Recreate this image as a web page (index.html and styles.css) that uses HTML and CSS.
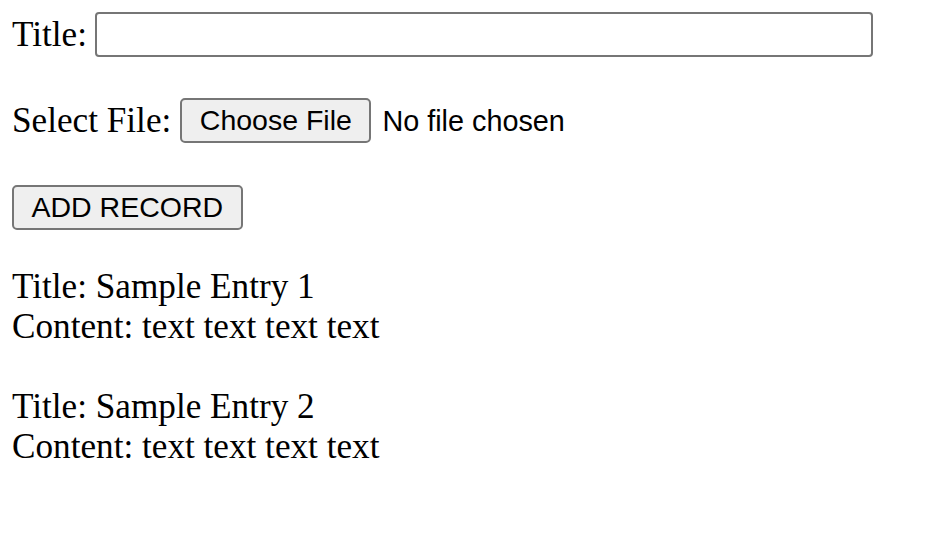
FILE: index.html
```html
<!DOCTYPE html>
<html>
<head>
<meta charset="utf-8">
<title>Records</title>
<link rel="stylesheet" href="styles.css">
</head>
<body>
<form class="form">
  <div class="row row-title">
    <label class="label" for="title">Title:</label>
    <input class="text-input" id="title" type="text">
  </div>
  <div class="row row-file">
    <span class="label">Select File:</span>
    <button type="button" class="btn">Choose File</button>
    <span class="file-name">No file chosen</span>
  </div>
  <div class="row row-submit">
    <button type="button" class="btn">ADD RECORD</button>
  </div>
</form>
<div class="records">
  <div class="record">
    <div>Title: Sample Entry 1</div>
    <div>Content: text text text text</div>
  </div>
  <div class="record">
    <div>Title: Sample Entry 2</div>
    <div>Content: text text text text</div>
  </div>
</div>
</body>
</html>
```
FILE: styles.css
```css
html, body {
  background: #ffffff;
}
body {
  margin: 0;
  padding: 12px;
  font-family: "Liberation Serif", "Times New Roman", serif;
  font-size: 35.2px;
  line-height: 40px;
  color: #000000;
}
.form {
  display: flex;
  flex-direction: column;
  margin: 0;
}
.row {
  display: flex;
  align-items: center;
}
.row-title {
  gap: 8px;
  margin-bottom: 41px;
}
.row-file {
  margin-bottom: 42px;
}
.row-file .label {
  margin-right: 9px;
}
.row-submit {
  margin-bottom: 37px;
}
.text-input {
  box-sizing: border-box;
  width: 778px;
  height: 45px;
  margin: 0;
  border: 2px solid #767676;
  border-radius: 4px;
  background: #ffffff;
  padding: 0 6px;
  font-family: "Liberation Sans", Arial, sans-serif;
  font-size: 28px;
}
.btn {
  box-sizing: border-box;
  height: 45px;
  margin: 0;
  padding: 0 17.5px;
  border: 2px solid #767676;
  border-radius: 5px;
  background: #efefef;
  color: #000000;
  font-family: "Liberation Sans", Arial, sans-serif;
  font-size: 28.5px;
  line-height: 1;
}
.file-name {
  margin-left: 11px;
  font-family: "Liberation Sans", Arial, sans-serif;
  font-size: 28.8px;
}
.record {
  margin-bottom: 40px;
}
```
